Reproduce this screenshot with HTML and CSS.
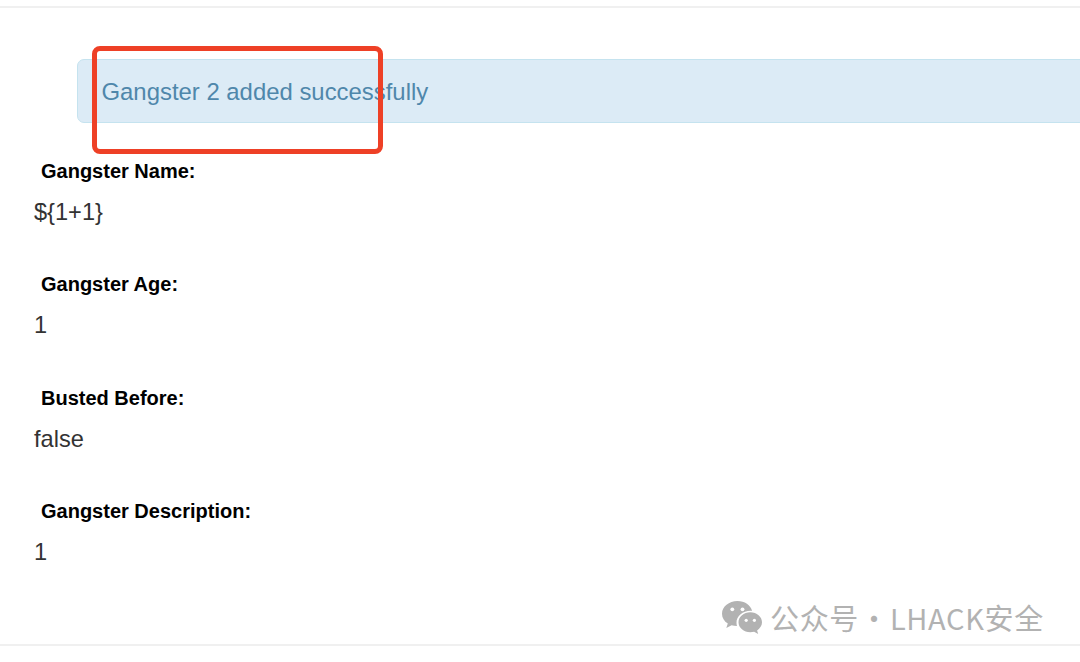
FILE: index.html
```html
<!DOCTYPE html>
<html lang="en">
<head>
    <meta charset="UTF-8">
    <title>Gangster added</title>
    <link rel="stylesheet" href="styles.css">
</head>
<body>
    <div class="page">
        <main class="content">
            <div class="alert">Gangster 2 added successfully</div>

            <div class="field">
                <label>Gangster Name:</label>
                <p>${1+1}</p>
            </div>
            <div class="field">
                <label>Gangster Age:</label>
                <p>1</p>
            </div>
            <div class="field">
                <label>Busted Before:</label>
                <p>false</p>
            </div>
            <div class="field">
                <label>Gangster Description:</label>
                <p>1</p>
            </div>
        </main>

        <!-- annotation drawn over the screenshot -->
        <div class="highlight"></div>

        <div class="watermark">
            <svg class="wechat" viewBox="0 0 40 33" width="40" height="33">
                <path class="bubble" d="M15.5 0C7 0 0 5.600 0 12.700c0 4 2.200 7.500 5.800 9.900L4.300 27l5.300-2.800c1.700.5 3.500.8 5.400.9-.3-1.100-.5-2.200-.5-3.300 0-6.700 6.300-12 14.100-12 .5 0 1 0 1.500.1C28.700 4.100 22.600 0 15.500 0z"/>
                <circle class="eye" cx="10.300" cy="8.300" r="1.900"/>
                <circle class="eye" cx="20.500" cy="8.300" r="1.900"/>
                <path class="bubble" d="M28.300 11.300c-6.500 0-11.800 4.500-11.800 10s5.300 10 11.800 10c1.300 0 2.600-.2 3.800-.5l4.100 2.200-1.100-3.600c2.900-1.900 4.900-4.800 4.900-8.100 0-5.500-5.200-10-11.700-10z"/>
                <circle class="eye" cx="24.200" cy="19.300" r="1.600"/>
                <circle class="eye" cx="32.400" cy="19.300" r="1.600"/>
            </svg>
            <span>公众号 · LHACK安全</span>
        </div>
    </div>
</body>
</html>
```

FILE: styles.css
```css
* {
    margin: 0;
    padding: 0;
    box-sizing: border-box;
}

body {
    font-family: "Liberation Sans", Arial, sans-serif;
    background-color: #fff;
    color: #333;
    overflow: hidden;
}

.page {
    position: relative;
    height: 640px;
    margin-top: 6px;
    border-top: 2px solid #f0f0f0;
    border-bottom: 2px solid #f0f0f0;
}

.content {
    padding: 51px 0 0 34px;
}

.alert {
    height: 64px;
    margin-left: 42.500px;
    margin-right: -20px;
    padding-left: 24px;
    line-height: 64px;
    font-size: 23.900px;
    color: #4f87ab;
    background-color: #dcebf6;
    border: 1px solid #c5e3ef;
    border-radius: 7px;
}

.field {
    height: 113.400px;
}

.alert + .field {
    margin-top: 37px;
}

.field label {
    display: block;
    height: 23px;
    margin-left: 7px;
    font-size: 20px;
    font-weight: 700;
    line-height: 23px;
    color: #000;
}

.field p {
    margin-top: 16px;
    font-size: 23.600px;
    line-height: 26px;
}

.highlight {
    position: absolute;
    left: 92px;
    top: 38px;
    width: 291px;
    height: 108px;
    border: 5px solid #ee4026;
    border-radius: 8px;
}

.watermark {
    position: absolute;
    left: 722px;
    top: 592px;
    display: flex;
    align-items: center;
    gap: 8px;
    color: #b2b2b2;
    font-family: "Noto Sans CJK SC", "Noto Sans", sans-serif;
    font-size: 29px;
    letter-spacing: 0.650px;
    word-spacing: -6.500px;
    line-height: 34px;
    white-space: nowrap;
}

.bubble {
    fill: #b2b2b2;
}

.eye {
    fill: #fff;
}
```
